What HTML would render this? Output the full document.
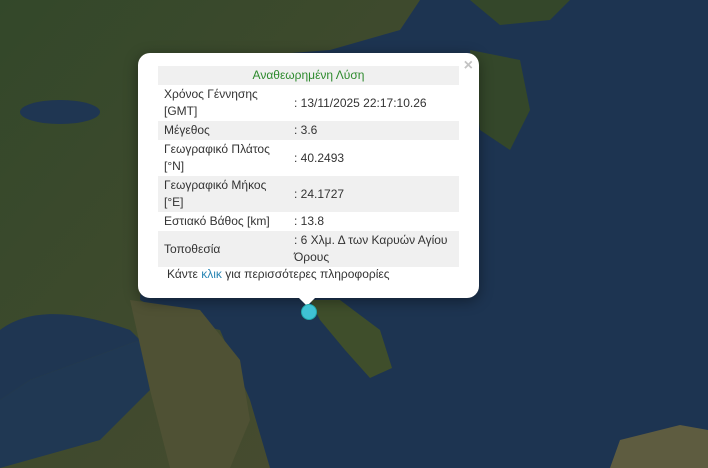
<!DOCTYPE html>
<html><head><meta charset="utf-8"><style>
html,body{margin:0;padding:0;width:708px;height:468px;overflow:hidden;background:#1c3350;font-family:"Liberation Sans",sans-serif}
.map{position:absolute;left:0;top:0}
.pop{position:absolute;left:138px;top:53px;width:341px;height:245px;background:#fff;border-radius:12px;box-shadow:0 3px 14px rgba(0,0,0,.4)}
.tip{position:absolute;left:297px;top:296px;width:0;height:0;border-left:10px solid transparent;border-right:10px solid transparent;border-top:10px solid #fff}
.x{position:absolute;right:6px;top:4px;color:#c3c3c3;font-size:16px;font-weight:bold}
table{position:absolute;left:20px;top:13px;width:301px;border-collapse:collapse;font-size:12px;color:#333;line-height:17px}
td{padding:1px 6px;vertical-align:middle}
tr.g td{background:#f0f0f0}
td.v{padding-left:2px}
.h{text-align:center;color:#2d8a2d}
.f{position:absolute;left:29px;top:214px;font-size:12px;color:#333}
.f span{color:#2a86b4}
.dot{position:absolute;left:301px;top:304px;width:14px;height:14px;border-radius:50%;background:#3fc2d4;border:1px solid #2aa}
</style></head><body>
<svg class="map" width="708" height="468">
<defs><linearGradient id="l" x1="0" y1="0" x2="1" y2="1"><stop offset="0" stop-color="#33482a"/><stop offset="1" stop-color="#4a4c30"/></linearGradient></defs>
<rect width="708" height="468" fill="#1d3451"/>
<path d="M0 0H420L400 30L330 50L200 60L150 120L140 300L180 320L220 330L250 400L270 468H0Z" fill="url(#l)"/>
<path d="M0 330C40 300 100 320 130 330L140 340L30 380L0 400Z" fill="#1f3652"/>
<path d="M0 400L30 380L140 340L150 390L100 440L0 468Z" fill="#203853"/>
<path d="M130 300L200 310L240 360L250 420L230 468H170L150 390Z" fill="#4f5134"/>
<path d="M310 300L340 300L380 330L392 368L370 378L345 350L320 320Z" fill="#3f4e2b"/>
<path d="M470 50L520 60L530 110L510 150L480 130Z" fill="#34472a"/>
<path d="M470 0H570L550 20L500 25Z" fill="#34472a"/>
<path d="M620 440L680 425L708 430V468H610Z" fill="#5e5c40"/>
<ellipse cx="60" cy="112" rx="40" ry="12" fill="#1f3652"/>
</svg>
<div class="pop">
<div class="x">×</div>
<table>
<tr class="g"><td colspan="2" class="h">Αναθεωρημένη Λύση</td></tr>
<tr><td style="width:122px">Χρόνος Γέννησης [GMT]</td><td class="v">: 13/11/2025 22:17:10.26</td></tr>
<tr class="g"><td>Μέγεθος</td><td class="v">: 3.6</td></tr>
<tr><td>Γεωγραφικό Πλάτος [°N]</td><td class="v">: 40.2493</td></tr>
<tr class="g"><td>Γεωγραφικό Μήκος [°E]</td><td class="v">: 24.1727</td></tr>
<tr><td>Εστιακό Βάθος [km]</td><td class="v">: 13.8</td></tr>
<tr class="g"><td>Τοποθεσία</td><td class="v">: 6 Χλμ. Δ των Καρυών Αγίου Όρους</td></tr>
</table>
<div class="f">Κάντε <span>κλικ</span> για περισσότερες πληροφορίες</div>
</div>
<div class="tip"></div>
<div class="dot"></div>
</body></html>
